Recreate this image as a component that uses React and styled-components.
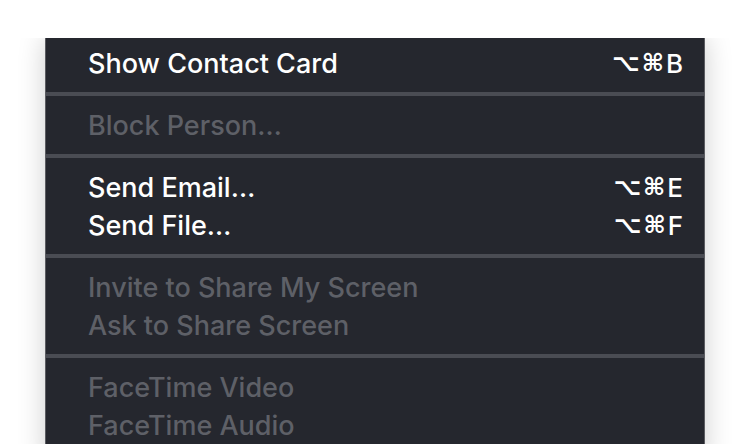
import styled, { createGlobalStyle } from 'styled-components'

const GlobalStyle = createGlobalStyle`
    html, body {
        margin: 0;
        padding: 0;
        background: #ffffff;
        height: 444px;
        overflow: hidden;
    }
`

const Page = styled.div`
    width: 750px;
    height: 444px;
    padding-top: 38px;
    padding-left: 45px;
    box-sizing: border-box;
    overflow: hidden;
`

const Menu = styled.div`
    width: 660px;
    box-sizing: border-box;
    background: #25272e;
    border-left: 1px solid #5b5c61;
    border-right: 1px solid #5b5c61;
    padding: 6px 0 20px;
    box-shadow: 0 0 26px rgba(0, 0, 0, 0.2);
    clip-path: inset(0 -60px -60px -60px);
    font-family: Inter, 'Noto Sans', sans-serif;
`

const Item = styled.div`
    display: flex;
    align-items: center;
    justify-content: space-between;
    height: 38px;
    padding: 0 21px 0 42px;
    font-size: 27px;
    font-weight: 500;
    color: ${(p) => (p.disabled ? '#5e6067' : '#ffffff')};
`

const Shortcut = styled.span`
    display: flex;
    align-items: center;
    gap: 2px;
    font-size: 26px;
`

const Glyph = styled.span`
    font-family: 'DejaVu Sans', sans-serif;
    font-size: 24px;
    font-weight: 700;
`

const Separator = styled.div`
    height: 4px;
    margin: 10px 0 10px;
    background: #4a4c53;
`

function Keys({ letter }) {
    return (
        <Shortcut>
            <Glyph>⌥</Glyph>
            <Glyph>⌘</Glyph>
            {letter}
        </Shortcut>
    )
}

function App() {
    return (
        <>
            <GlobalStyle />
            <Page>
                <Menu>
                    <Item>
                        Show Contact Card
                        <Keys letter='B' />
                    </Item>
                    <Separator />
                    <Item disabled>Block Person…</Item>
                    <Separator />
                    <Item>
                        Send Email…
                        <Keys letter='E' />
                    </Item>
                    <Item>
                        Send File…
                        <Keys letter='F' />
                    </Item>
                    <Separator />
                    <Item disabled>Invite to Share My Screen</Item>
                    <Item disabled>Ask to Share Screen</Item>
                    <Separator />
                    <Item disabled>FaceTime Video</Item>
                    <Item disabled>FaceTime Audio</Item>
                </Menu>
            </Page>
        </>
    )
}

export default App
